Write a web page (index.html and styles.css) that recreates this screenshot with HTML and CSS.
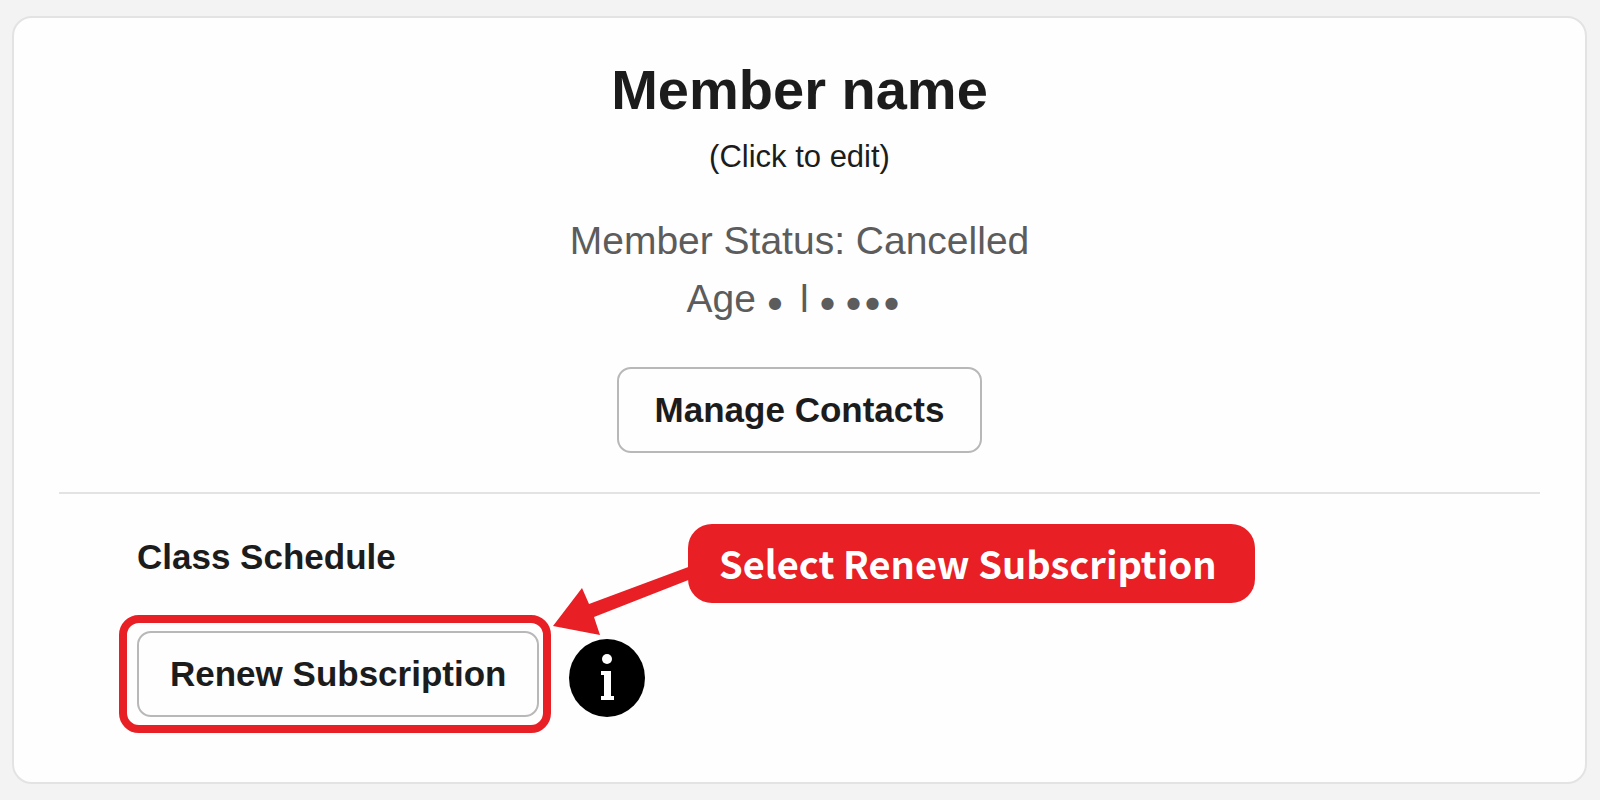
FILE: index.html
```html
<!DOCTYPE html>
<html lang="en">
<head>
<meta charset="utf-8">
<title>Member profile</title>
<link rel="stylesheet" href="styles.css">
</head>
<body>
<main class="card">
  <header class="profile">
    <h1 class="name">Member name</h1>
    <p class="hint">(Click to edit)</p>
    <p class="status">Member Status: Cancelled</p>
    <p class="status age">
      <span>Age</span>
      <span class="dots"><span>●</span></span>
      <span class="bar">l</span>
      <span class="dots"><span>●</span></span>
      <span class="dots"><span>●</span><span>●</span><span>●</span></span>
    </p>
    <button class="button" type="button">Manage Contacts</button>
  </header>
  <section class="schedule">
    <h2 class="heading">Class Schedule</h2>
    <div class="actions">
      <div class="highlight">
        <button class="button button-renew" type="button">Renew Subscription</button>
      </div>
      <button class="info" type="button" aria-label="Information">
        <svg viewBox="0 0 76 78" width="76" height="78" aria-hidden="true">
          <ellipse cx="38" cy="39" rx="38" ry="39" fill="#000"/>
          <circle cx="38" cy="20" r="5" fill="#fff"/>
          <path d="M32 32h10v25h3v4H32v-4h3V36h-3z" fill="#fff"/>
        </svg>
      </button>
    </div>
    <div class="annotation">
      <svg class="arrow" viewBox="0 0 138 60" width="138" height="60" aria-hidden="true">
        <path d="M138 4 36 42 29 26 0 64 47 73 41 55 138 17z" fill="#e81f25"/>
      </svg>
      <p class="callout">Select Renew Subscription</p>
    </div>
  </section>
</main>
</body>
</html>
```
FILE: styles.css
```css
* { box-sizing: border-box; }
body {
  margin: 0;
  padding: 16px 13px 16px 12px;
  background: #f3f3f3;
  color: #1c1c1c;
  font-family: "Liberation Sans", Arial, sans-serif;
}
h1, h2, p { margin: 0; }
.card {
  padding: 40px 45px 49px;
  background: #fefefe;
  border: 2px solid #e3e3e3;
  border-radius: 20px;
}
.profile {
  display: flex;
  flex-direction: column;
  align-items: center;
  padding-bottom: 39px;
  border-bottom: 2px solid #e3e3e3;
}
.name { font-size: 56px; line-height: 64px; }
.hint { margin-top: 15px; font-size: 31px; line-height: 40px; }
.status { font-size: 39px; line-height: 58px; color: #5c5c5c; }
.hint + .status { margin-top: 35px; }
.age {
  display: flex;
  align-items: flex-start;
  gap: 12px;
  height: 58px;
  padding-right: 14px;
  margin-bottom: 39px;
}
.dots {
  display: flex;
  gap: 5px;
  font: 16px/66px "DejaVu Sans", sans-serif;
}
.bar { margin-left: 6px; }
.button {
  height: 86px;
  padding: 0 36px;
  border: 2px solid #b8b8b8;
  border-radius: 14px;
  background: #fefefe;
  color: inherit;
  font: bold 35px "Liberation Sans", Arial, sans-serif;
}
.schedule {
  position: relative;
  padding: 43px 0 0 60px;
}
.heading { padding-left: 18px; font-size: 35px; line-height: 40px; }
.actions {
  display: flex;
  align-items: flex-end;
  gap: 18px;
  margin-top: 38px;
}
.highlight {
  padding: 8px 4px 8px 10px;
  border: 8px solid #e81f25;
  border-radius: 20px;
}
.button-renew { display: block; padding: 0 31px; }
.info {
  display: block;
  margin-bottom: 16px;
  padding: 0;
  border: 0;
  background: none;
}
.info svg, .arrow { display: block; overflow: visible; }
.annotation {
  position: absolute;
  top: 30px;
  left: 494px;
  display: flex;
  align-items: flex-start;
}
.arrow { margin: 38px -3px 0 0; }
.callout {
  padding: 0 38px 1px 31px;
  border-radius: 24px;
  background: #e81f25;
  color: #fff;
  font: bold 38px/78px "Noto Sans CJK JP", sans-serif;
  white-space: nowrap;
}
```
